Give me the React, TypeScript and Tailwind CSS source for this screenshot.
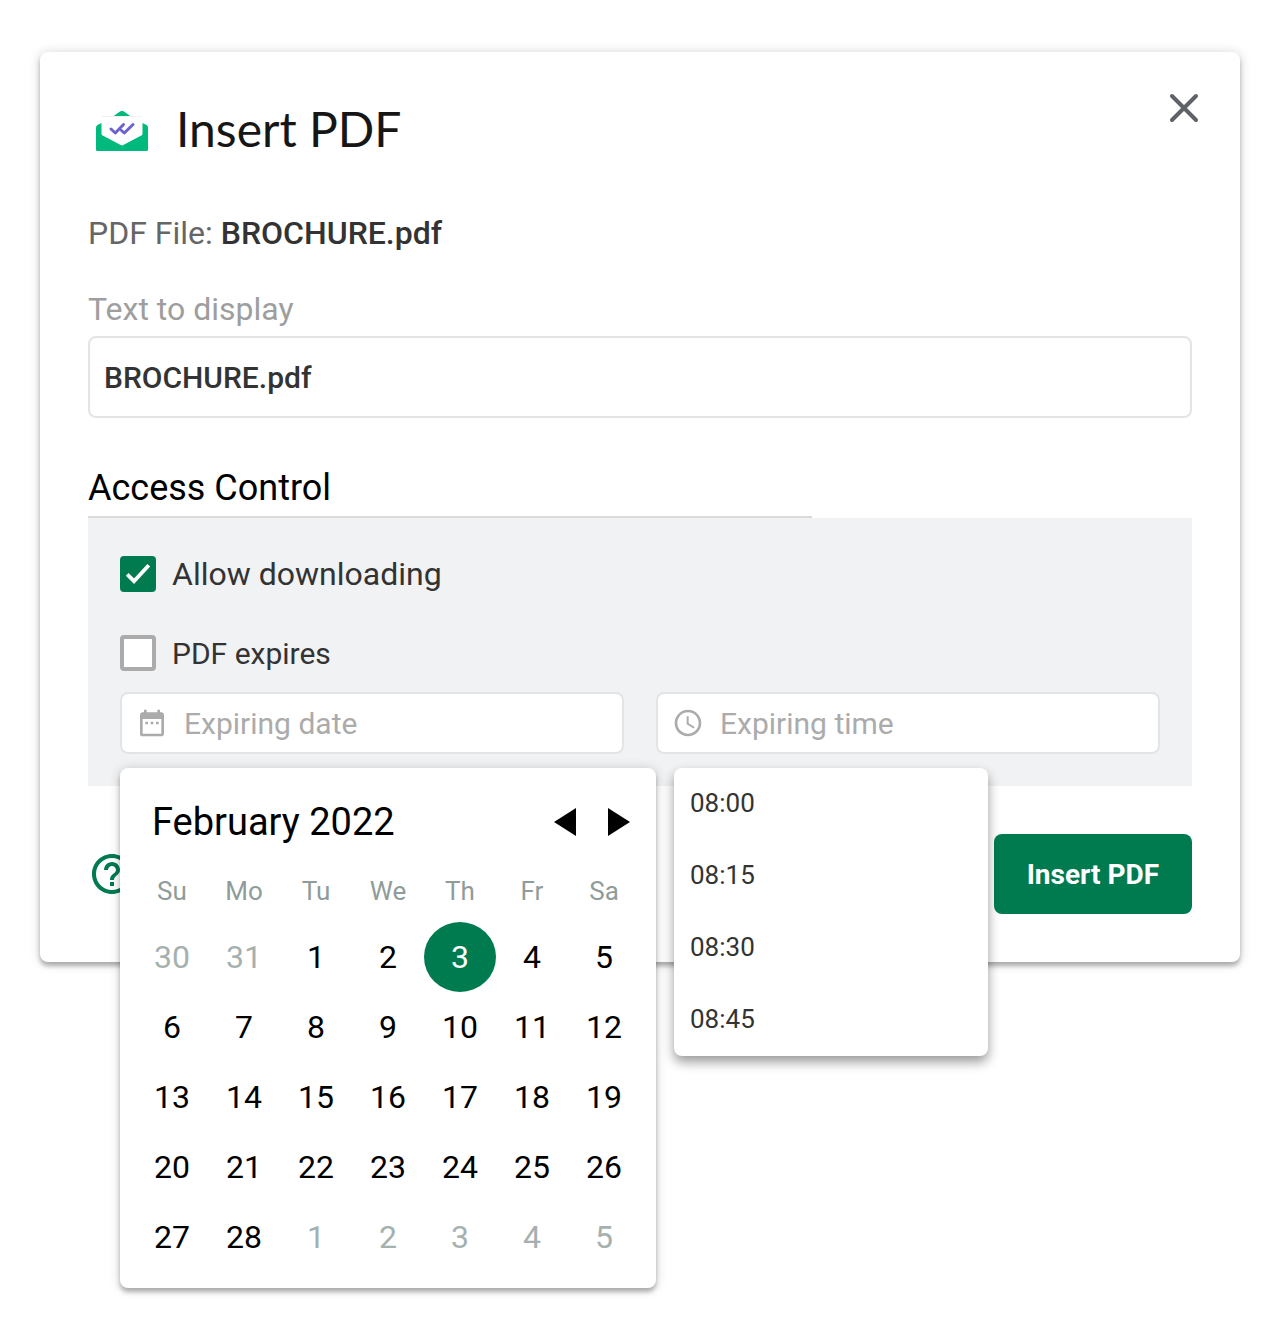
import { useState } from "react";
import { MdAccessTime, MdDateRange, MdHelpOutline } from "react-icons/md";

const WEEKDAYS = ["Su", "Mo", "Tu", "We", "Th", "Fr", "Sa"];
const TIMES = ["08:00", "08:15", "08:30", "08:45"];

// February 2022, padded with the neighbouring months
const DAYS = [
  ...[30, 31].map(day => ({ key: `jan-${day}`, day, current: false })),
  ...Array.from({ length: 28 }, (_, i) => ({ key: `feb-${i + 1}`, day: i + 1, current: true })),
  ...[1, 2, 3, 4, 5].map(day => ({ key: `mar-${day}`, day, current: false })),
];

const Logo = () => (
  <svg className="h-10 w-13 shrink-0" viewBox="0 0 52 40" fill="none" aria-hidden="true">
    <path d="M17 5.5 24 .6a3.500 3.500 0 0 1 4 0L35 5.5Z" fill="#00b97c" />
    <path d="M0 17c0-1.600.6-2.400 2-3.200L5.500 12h41l3.500 1.800c1.400.8 2 1.600 2 3.200v21.500a1.500 1.500 0 0 1-1.500 1.500h-49A1.500 1.500 0 0 1 0 38.500Z" fill="#00b97c" />
    <path d="M5.500 5h41v17.500c0 1-.4 1.600-1.200 2.100L27.300 34a2.500 2.500 0 0 1-2.600 0L6.700 24.600c-.8-.5-1.200-1.100-1.200-2.100Z" fill="#fff" />
    <path d="M5.500 5.500h41" stroke="#f1f1f1" />
    <path d="m15 18 4.300 4 8.200-8.500M25.500 19.500l2.800 2.500 8.700-8.500" stroke="#6a63d0" strokeWidth="3" strokeLinecap="round" strokeLinejoin="round" />
  </svg>
);

interface CheckFieldProps {
  label: string;
  textClass: string;
  checked: boolean;
  onChange: (checked: boolean) => void;
}

const CheckField = ({ label, textClass, checked, onChange }: CheckFieldProps) => (
  <label className="flex h-9 w-fit items-center gap-4 text-[#333333]">
    <span className="grid size-9 shrink-0 place-items-center">
      <input
        type="checkbox"
        checked={checked}
        onChange={event => onChange(event.target.checked)}
        className="peer col-start-1 row-start-1 size-9 appearance-none rounded border-4 border-[#ababab] bg-white checked:border-[#007b50] checked:bg-[#007b50]"
      />
      <svg
        className="pointer-events-none invisible col-start-1 row-start-1 size-9 text-white peer-checked:visible"
        viewBox="0 0 36 36"
        fill="none"
        stroke="currentColor"
        strokeWidth="3.8"
      >
        <path d="m7.200 18.400 6.800 6.800L28.800 9.200" />
      </svg>
    </span>
    <span className={textClass}>{label}</span>
  </label>
);

interface CalendarProps {
  selected: string;
  onSelect: (key: string) => void;
}

const Calendar = ({ selected, onSelect }: CalendarProps) => (
  <div className="absolute top-full left-0 z-10 mt-3.5 w-[536px] rounded-lg bg-white px-4 pt-7 pb-4 shadow-[0_4px_4px_rgba(0,0,0,0.25),0_1px_12px_rgba(0,0,0,0.18)]">
    <div className="flex items-center justify-between pr-2.5 pl-4">
      <h3 className="text-[38px] leading-[52px] text-black">February 2022</h3>
      <div className="flex gap-8 text-black">
        <button type="button" aria-label="Previous month">
          <svg className="h-7 w-[22px]" viewBox="0 0 22 28" fill="currentColor">
            <path d="M22 0v28L0 14Z" />
          </svg>
        </button>
        <button type="button" aria-label="Next month">
          <svg className="h-7 w-[22px]" viewBox="0 0 22 28" fill="currentColor">
            <path d="M0 0v28l22-14Z" />
          </svg>
        </button>
      </div>
    </div>
    <div className="mt-3 grid grid-cols-7 text-center text-[26px] leading-[62px] text-[#8f9c9a]">
      {WEEKDAYS.map(name => (
        <span key={name}>{name}</span>
      ))}
    </div>
    <div className="grid grid-cols-7 text-[32px]">
      {DAYS.map(({ key, day, current }) => (
        <button
          key={key}
          type="button"
          onClick={() => onSelect(key)}
          className={`h-[70px] rounded-[50%] ${key === selected ? "bg-[#007b50] text-white" : current ? "text-black" : "text-[#a5b1af]"}`}
        >
          {day}
        </button>
      ))}
    </div>
  </div>
);

const App = () => {
  const [text, setText] = useState("BROCHURE.pdf");
  const [download, setDownload] = useState(true);
  const [expires, setExpires] = useState(false);
  const [day, setDay] = useState("feb-3");
  const [time, setTime] = useState("");

  return (
    <main className="min-h-screen bg-white px-10 pt-13 font-[Roboto,sans-serif]">
      <section className="rounded-lg bg-white pb-12 shadow-[0_4px_4px_rgba(0,0,0,0.25),0_1px_12px_rgba(0,0,0,0.18)]">
        <header className="flex items-start justify-between pt-10 pr-10 pl-14">
          <div className="flex items-center gap-7 pt-[7px]">
            <Logo />
            <h1 className="pb-1 font-[Lato,sans-serif] text-[48px] leading-[60px] text-[#161616]">Insert PDF</h1>
          </div>
          <button type="button" aria-label="Close" className="text-[#5f6368]">
            <svg className="size-8" viewBox="0 0 32 32" fill="none" stroke="currentColor" strokeWidth="4" strokeLinecap="round">
              <path d="m4 4 24 24M28 4 4 28" />
            </svg>
          </button>
        </header>

        <form className="px-12 pt-[50px]" onSubmit={event => event.preventDefault()}>
          <p className="text-[32px] leading-10 text-[#666666]">
            PDF File: <span className="font-medium text-[#333333]">BROCHURE.pdf</span>
          </p>

          <label htmlFor="display-text" className="mt-9 block text-[32px] leading-10 text-[#9e9e9e]">
            Text to display
          </label>
          <input
            id="display-text"
            type="text"
            value={text}
            onChange={event => setText(event.target.value)}
            className="mt-[7px] h-[82px] w-full rounded-lg border-2 border-[#e4e4e4] bg-white px-3.5 text-[30px] font-medium text-[#333333]"
          />

          <h2 className="mt-12 w-[724px] max-w-full border-b-2 border-[#dadada] pb-1.5 text-[36px] leading-11 text-black">
            Access Control
          </h2>
          <div className="bg-[#f1f2f4] px-8 pt-[38px] pb-8">
            <CheckField label="Allow downloading" textClass="text-[32px]" checked={download} onChange={setDownload} />
            <div className="mt-[43px]">
              <CheckField label="PDF expires" textClass="text-[30px]" checked={expires} onChange={setExpires} />
            </div>

            <div className="mt-[21px] grid grid-cols-2 gap-8">
              <div className="relative">
                <div className="flex h-[62px] items-center gap-4 rounded-lg border-2 border-[#e4e4e4] bg-white px-3.5 text-[#ababab]">
                  <MdDateRange className="size-8 shrink-0" />
                  <input
                    type="text"
                    aria-label="Expiring date"
                    placeholder="Expiring date"
                    className="w-full min-w-0 bg-transparent text-[30px] placeholder:text-[#ababab]"
                  />
                </div>
                <Calendar selected={day} onSelect={setDay} />
              </div>
              <div className="relative">
                <div className="flex h-[62px] items-center gap-4 rounded-lg border-2 border-[#e4e4e4] bg-white px-3.5 text-[#ababab]">
                  <MdAccessTime className="size-8 shrink-0" />
                  <input
                    type="text"
                    aria-label="Expiring time"
                    placeholder="Expiring time"
                    value={time}
                    onChange={event => setTime(event.target.value)}
                    className="w-full min-w-0 bg-transparent text-[30px] placeholder:text-[#ababab]"
                  />
                </div>
                <ul className="absolute top-full left-[18px] z-10 mt-3.5 w-[314px] rounded-lg bg-white shadow-[0_6px_12px_rgba(0,0,0,0.4)]">
                  {TIMES.map(item => (
                    <li key={item}>
                      <button type="button" onClick={() => setTime(item)} className="block h-18 w-full px-4 pb-0.5 text-left text-[26px] text-[#333333]">
                        {item}
                      </button>
                    </li>
                  ))}
                </ul>
              </div>
            </div>
          </div>

          <footer className="mt-12 flex items-center justify-between">
            <button type="button" aria-label="Help" className="text-[#007b50]">
              <MdHelpOutline className="size-12" />
            </button>
            <button type="submit" className="h-20 rounded-lg bg-[#007b50] px-[33px] pt-0.5 text-[28px] font-bold text-white">
              Insert PDF
            </button>
          </footer>
        </form>
      </section>
    </main>
  );
};

export default App;
